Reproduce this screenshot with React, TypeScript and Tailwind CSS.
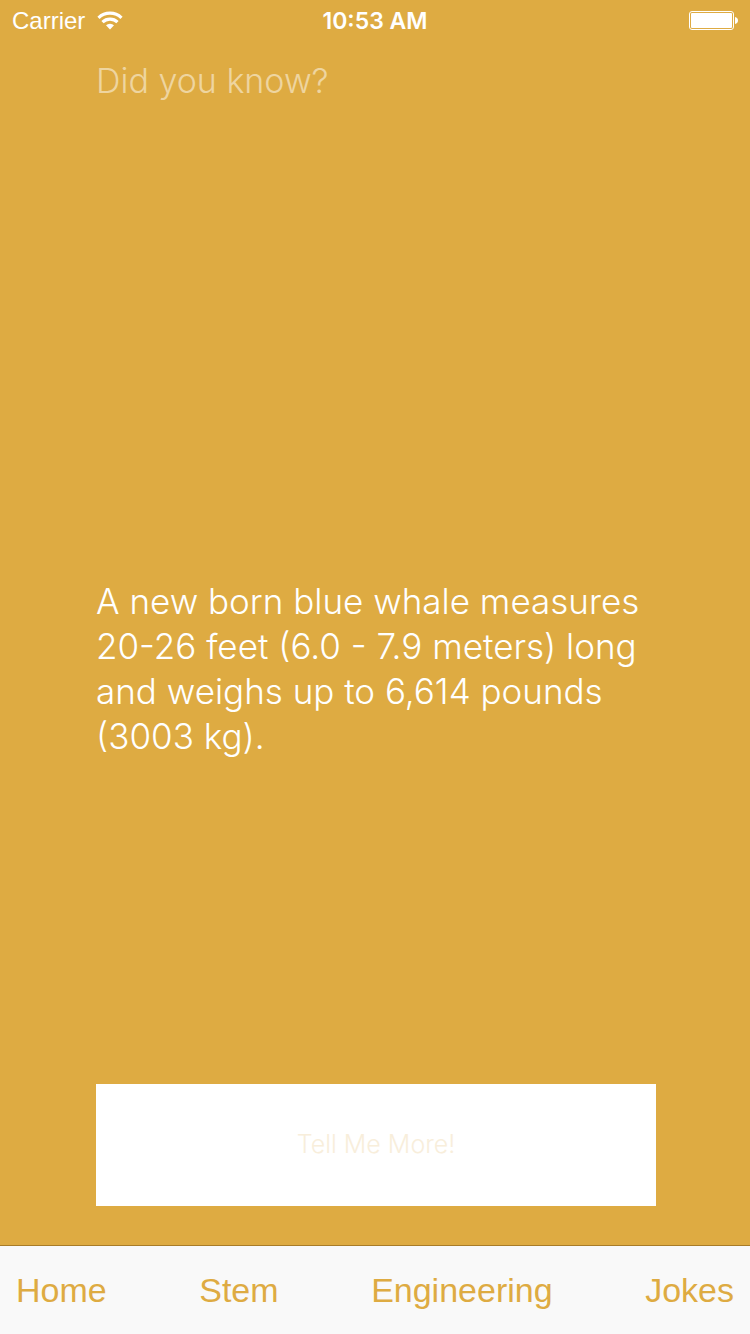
const tabs = ["Home", "Stem", "Engineering", "Jokes"];

function WifiIcon() {
  return (
    <svg width="26" height="20" viewBox="0 0 26 20" aria-hidden="true" fill="none" stroke="#fff" strokeWidth="3.2">
      <path d="M1.500 6.800a16.600 16.600 0 0 1 23 0" />
      <path d="M5.500 11.200a10.800 10.800 0 0 1 15 0" />
      <path d="M13 18.500l-4-4.200a5.800 5.800 0 0 1 8 0z" fill="#fff" stroke="none" />
    </svg>
  );
}

function BatteryIcon() {
  return (
    <svg width="49" height="20" viewBox="0 0 49 20" aria-hidden="true">
      <rect x="0.5" y="0.5" width="44" height="18" rx="2.5" fill="none" stroke="#fff" />
      <rect x="2" y="2" width="41" height="15" rx="1" fill="#fff" />
      <path d="M46 6c2 .3 3 1.600 3 3.500s-1 3.200-3 3.500z" fill="#fff" />
    </svg>
  );
}

export default function App() {
  return (
    <div className="grid min-h-screen grid-rows-[1fr_auto_1fr] bg-[#deab42] font-['Liberation_Sans',Arial,sans-serif] text-white">
      <div>
        <header className="grid h-[42px] grid-cols-[1fr_auto_1fr] items-center px-3 text-2xl">
          <div className="flex items-center gap-3">
            <span>Carrier</span>
            <WifiIcon />
          </div>
          <time className="font-['Inter',sans-serif] text-[23px] font-semibold">10:53 AM</time>
          <div className="flex justify-end">
            <BatteryIcon />
          </div>
        </header>
        <h1 className="px-24 pt-4 font-['Inter',sans-serif] text-[34px] font-light leading-[45px] text-white/50">
          Did you know?
        </h1>
      </div>

      <p className="pl-24 pr-[94px] pt-1 font-['Inter',sans-serif] text-[35px] font-light leading-[45px]">
        A new born blue whale measures 20-26 feet (6.0 - 7.9 meters) long and weighs up to 6,614 pounds (3003 kg).
      </p>

      <div className="flex flex-col justify-end">
        <div className="pb-[39px] pl-24 pr-[94px]">
          <button
            type="button"
            className="h-[122px] w-full bg-white font-['Inter',sans-serif] text-[25px] font-light text-[#f8eedb]"
          >
            Tell Me More!
          </button>
        </div>
        <nav className="flex h-[89px] items-center justify-between border-t border-[#a87c28] bg-[#f9f9f9] px-4 text-[34px] text-[#deab42]">
          {tabs.map((tab) => (
            <a key={tab} href={`#${tab.toLowerCase()}`}>
              {tab}
            </a>
          ))}
        </nav>
      </div>
    </div>
  );
}
